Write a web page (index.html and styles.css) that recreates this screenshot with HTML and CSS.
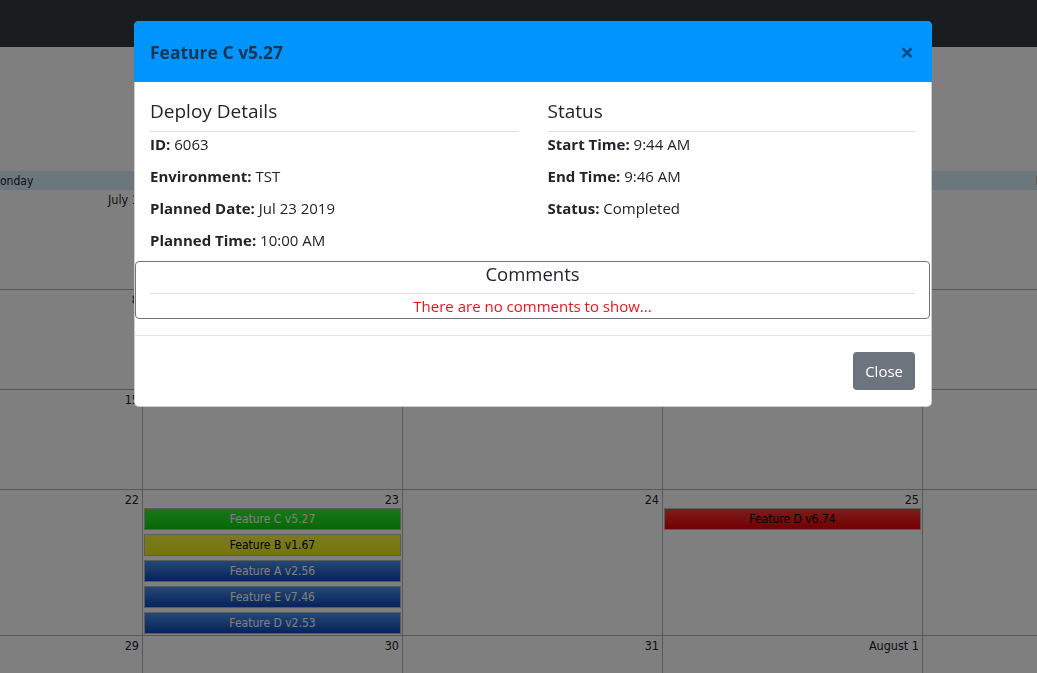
FILE: index.html
```html
<!DOCTYPE html>
<html lang="en">
<head>
<meta charset="utf-8">
<title>Deploy Calendar</title>
<link rel="stylesheet" href="styles.css">
</head>
<body>
<div class="navbar"></div>
<div class="calendar">
  <div class="cal-head">
    <div class="dayname">Monday</div>
    <div class="dayname">Tuesday</div>
    <div class="dayname">Wednesday</div>
    <div class="dayname">Thursday</div>
    <div class="dayname">Friday</div>
  </div>
  <div class="week">
    <div class="cell"><div class="num">July 1</div></div>
    <div class="cell"><div class="num">2</div></div>
    <div class="cell"><div class="num">3</div></div>
    <div class="cell"><div class="num">4</div></div>
    <div class="cell"><div class="num">5</div></div>
  </div>
  <div class="week">
    <div class="cell"><div class="num">8</div></div>
    <div class="cell"><div class="num">9</div></div>
    <div class="cell"><div class="num">10</div></div>
    <div class="cell"><div class="num">11</div></div>
    <div class="cell"><div class="num">12</div></div>
  </div>
  <div class="week">
    <div class="cell"><div class="num">15</div></div>
    <div class="cell"><div class="num">16</div></div>
    <div class="cell"><div class="num">17</div></div>
    <div class="cell"><div class="num">18</div></div>
    <div class="cell"><div class="num">19</div></div>
  </div>
  <div class="week week-tall">
    <div class="cell"><div class="num">22</div></div>
    <div class="cell">
      <div class="num">23</div>
      <div class="event ev-green">Feature C v5.27</div>
      <div class="event ev-yellow">Feature B v1.67</div>
      <div class="event ev-blue">Feature A v2.56</div>
      <div class="event ev-blue">Feature E v7.46</div>
      <div class="event ev-blue">Feature D v2.53</div>
    </div>
    <div class="cell"><div class="num">24</div></div>
    <div class="cell">
      <div class="num">25</div>
      <div class="event ev-red">Feature D v6.74</div>
    </div>
    <div class="cell"><div class="num">26</div></div>
  </div>
  <div class="week">
    <div class="cell"><div class="num">29</div></div>
    <div class="cell"><div class="num">30</div></div>
    <div class="cell"><div class="num">31</div></div>
    <div class="cell"><div class="num">August 1</div></div>
    <div class="cell"><div class="num">2</div></div>
  </div>
</div>

<div class="backdrop"></div>

<div class="modal">
  <div class="modal-header">
    <h5 class="modal-title">Feature C v5.27</h5>
    <button class="close" type="button">&times;</button>
  </div>
  <div class="modal-body">
    <div class="row">
      <div class="col">
        <h4 class="section-title">Deploy Details</h4>
        <hr class="rule">
        <p class="field"><b>ID:</b> 6063</p>
        <p class="field"><b>Environment:</b> TST</p>
        <p class="field"><b>Planned Date:</b> Jul 23 2019</p>
        <p class="field"><b>Planned Time:</b> 10:00 AM</p>
      </div>
      <div class="col">
        <h4 class="section-title">Status</h4>
        <hr class="rule">
        <p class="field"><b>Start Time:</b> 9:44 AM</p>
        <p class="field"><b>End Time:</b> 9:46 AM</p>
        <p class="field"><b>Status:</b> Completed</p>
      </div>
    </div>
    <div class="comments">
      <h4 class="comments-title">Comments</h4>
      <hr class="rule comments-rule">
      <p class="empty">There are no comments to show...</p>
    </div>
  </div>
  <div class="modal-footer">
    <button class="btn" type="button">Close</button>
  </div>
</div>
</body>
</html>
```

FILE: styles.css
```css
* { box-sizing: border-box; }

html, body {
  margin: 0;
  padding: 0;
  width: 1037px;
  height: 673px;
  overflow: hidden;
  background: #fff;
  font-family: "Open Sans", "Noto Sans", sans-serif;
  color: #212529;
}

.navbar {
  height: 47px;
  background: #343a40;
}

.calendar {
  margin-left: -118px;
  width: 1300px;
  padding-top: 124px;
  font-family: "DejaVu Sans Condensed", "DejaVu Sans", sans-serif;
  font-size: 12px;
}

.cal-head {
  display: grid;
  grid-template-columns: repeat(5, 260px);
  height: 19px;
  background: #d8edfa;
}

.dayname {
  text-align: center;
  line-height: 20px;
  font-size: 12px;
}

.week {
  display: grid;
  grid-template-columns: repeat(5, 260px);
  height: 100px;
  border-bottom: 1px solid #b0b0b0;
}

.week-tall {
  height: 146px;
}

.cell {
  border-left: 1px solid #b0b0b0;
  padding: 0 0 1px 1px;
  display: flex;
  flex-direction: column;
  gap: 4px;
}

.num {
  text-align: right;
  padding-right: 3px;
  height: 18px;
  line-height: 19px;
  font-size: 12.5px;
  margin-bottom: -4px;
}

.event {
  height: 22px;
  line-height: 20px;
  text-align: center;
  font-size: 12px;
  border: 1px solid #b8b8b8;
  margin-right: 1px;
}

.ev-green {
  background: linear-gradient(#2cf22c, #10d010);
  color: #fff;
}

.ev-yellow {
  background: linear-gradient(#f6f63a, #eaea1c);
  color: #000;
}

.ev-blue {
  background: linear-gradient(#4c90e8, #0a48b8);
  color: #fff;
}

.ev-red {
  background: linear-gradient(#ff3a3a, #e40000);
  color: #000;
}

.backdrop {
  position: fixed;
  inset: 0;
  background: rgba(0, 0, 0, 0.5);
}

.modal {
  position: fixed;
  top: 21px;
  left: 134px;
  width: 798px;
  background: #fff;
  border: 1px solid rgba(0, 0, 0, 0.2);
  border-radius: 5px;
  font-size: 15px;
  line-height: 24px;
}

.modal-header {
  display: flex;
  align-items: center;
  height: 61px;
  margin: -1px -1px 0;
  padding: 1px 17px 0 16px;
  background: #0094ff;
  border-radius: 5px 5px 0 0;
}

.modal-title {
  margin: 0;
  font-size: 17.5px;
  line-height: 28px;
  font-weight: 700;
  color: #183552;
}

.close {
  margin-left: auto;
  margin-right: 1px;
  padding: 0;
  border: 0;
  background: transparent;
  font-family: "Open Sans", sans-serif;
  font-size: 24px;
  font-weight: 700;
  line-height: 28px;
  color: #000;
  opacity: 0.5;
}

.modal-body {
  padding: 17px 16px 16px 15px;
}

.row {
  display: flex;
  margin: 0 -15px;
}

.col {
  flex: 1 1 50%;
  padding: 0 15px;
}

.section-title {
  margin: 0 0 7px;
  font-size: 19px;
  line-height: 25px;
  font-weight: 400;
}

.rule {
  margin: 0;
  border: 0;
  border-top: 1px solid rgba(0, 0, 0, 0.12);
}

.field {
  margin: 0 0 8px;
}

.field b {
  font-weight: 700;
}

.comments {
  margin: 1px -15px 0 -15px;
  padding: 0 14px;
  border: 1px solid #6f757b;
  border-radius: 4px;
  text-align: center;
}

.comments-title {
  margin: 0 0 7px;
  font-size: 18.5px;
  line-height: 24px;
  font-weight: 400;
}

.empty {
  margin: 0;
  color: #e8141c;
}

.modal-footer {
  display: flex;
  justify-content: flex-end;
  padding: 16px;
  border-top: 1px solid #dee2e6;
}

.btn {
  height: 38px;
  padding: 0 12px;
  border: 0;
  border-radius: 4px;
  background: #6c757d;
  color: #fff;
  font-family: "Open Sans", sans-serif;
  font-size: 15px;
}
```
